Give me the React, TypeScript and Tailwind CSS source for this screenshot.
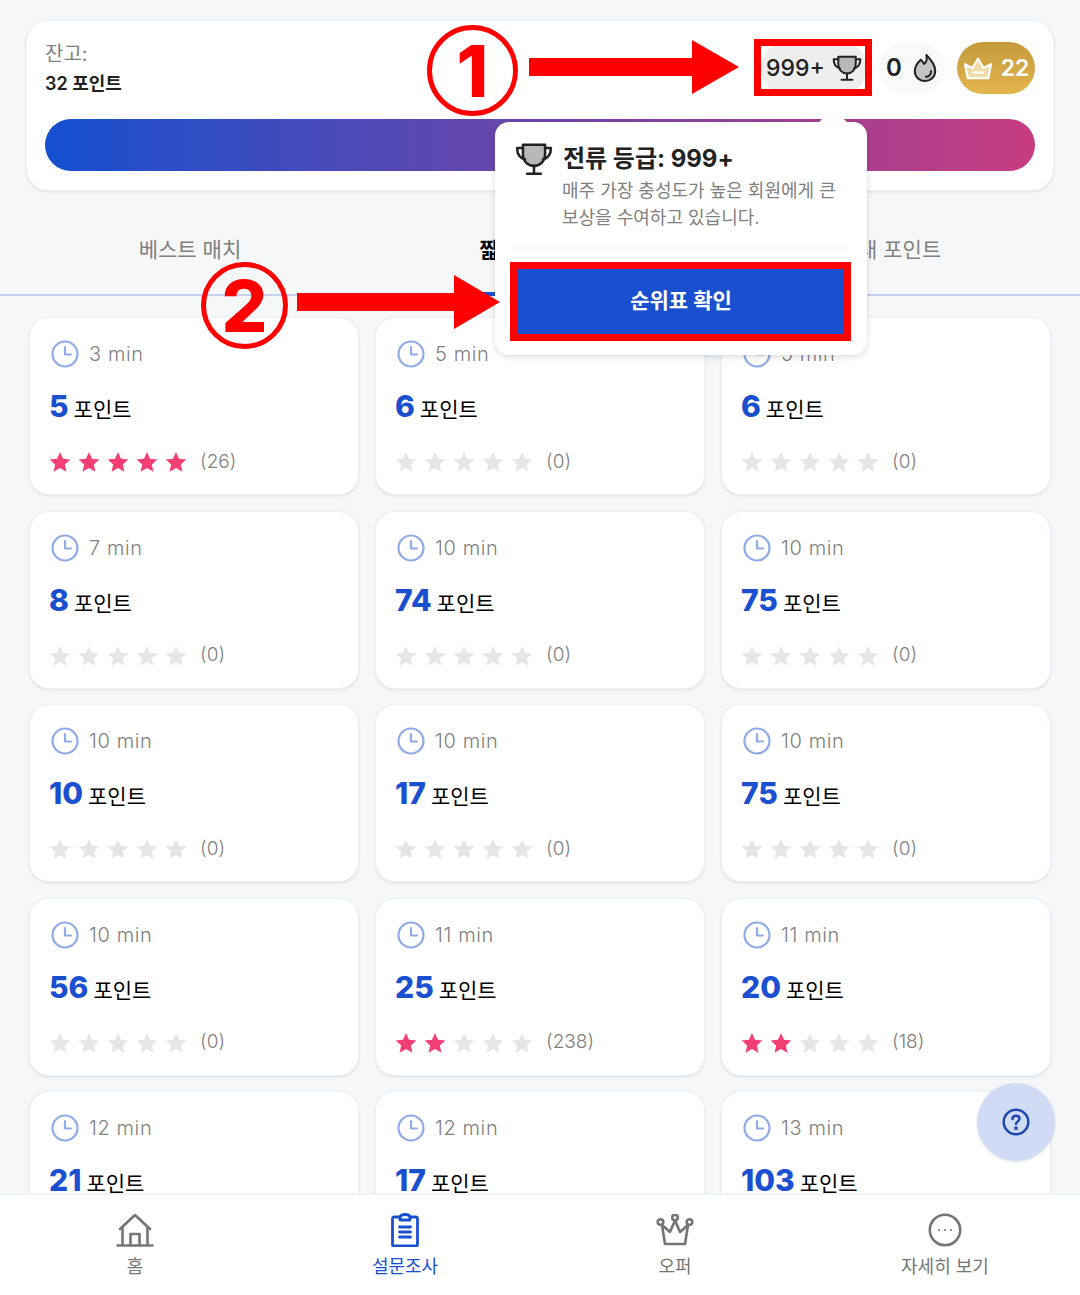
const CARDS = [
  { time: "3 min", pts: 5, filled: 5, count: 26 },
  { time: "5 min", pts: 6, filled: 0, count: 0 },
  { time: "5 min", pts: 6, filled: 0, count: 0 },
  { time: "7 min", pts: 8, filled: 0, count: 0 },
  { time: "10 min", pts: 74, filled: 0, count: 0 },
  { time: "10 min", pts: 75, filled: 0, count: 0 },
  { time: "10 min", pts: 10, filled: 0, count: 0 },
  { time: "10 min", pts: 17, filled: 0, count: 0 },
  { time: "10 min", pts: 75, filled: 0, count: 0 },
  { time: "10 min", pts: 56, filled: 0, count: 0 },
  { time: "11 min", pts: 25, filled: 2, count: 238 },
  { time: "11 min", pts: 20, filled: 2, count: 18 },
  { time: "12 min", pts: 21, filled: 0, count: 0 },
  { time: "12 min", pts: 17, filled: 0, count: 0 },
  { time: "13 min", pts: 103, filled: 0, count: 0 },
];

function Trophy({ size = 32 }: { size?: number }) {
  return (
    <svg width={size} height={size} viewBox="0 0 36 36" fill="none" stroke="#222" strokeWidth="2.400" strokeLinejoin="round" strokeLinecap="round">
      <path d="M7.500 4.500h21V13c0 7-4.500 11.500-10.500 11.500S7.500 20 7.500 13z" fill="#b8b8b8" />
      <path d="M7.500 7.500H2c0 6 2.500 9.500 7.500 11M28.500 7.500H34c0 6-2.500 9.500-7.500 11" />
      <path d="M18 24.500V31M11.500 32h13" />
    </svg>
  );
}

function Flame() {
  return (
    <svg width="26" height="32" viewBox="0 0 28 32" fill="#c4c4c4" stroke="#222" strokeWidth="2.200" strokeLinejoin="round" strokeLinecap="round">
      <path d="M15.500 2c.5 4 1 7-2.500 9.500C12 9.500 11 8.500 9.500 7 5 11 3 15 3 19.500 3 25.500 8 30 14 30s11-4.500 11-10.500C25 12 20 7 15.500 2z" />
      <path d="M20.500 19.500c0 3.500-2.500 5.800-5.500 6" fill="none" />
    </svg>
  );
}

function Crown() {
  return (
    <svg width="30" height="26" viewBox="0 0 32 28" fill="#efdca6" stroke="#fff" strokeWidth="2.400" strokeLinejoin="round" strokeLinecap="round">
      <path d="M5 25 2 10l8 4 6-10 6 10 8-4-3 15z" />
      <path d="M11 19h10" fill="none" />
    </svg>
  );
}

function Clock() {
  return (
    <svg width="28" height="28" viewBox="0 0 28 28" fill="none" stroke="#8fabe6" strokeWidth="2.200" strokeLinecap="round" strokeLinejoin="round" className="shrink-0">
      <circle cx="14" cy="14" r="12.500" />
      <path d="M14 7v7.500h6" />
    </svg>
  );
}

function Star({ on }: { on: boolean }) {
  return (
    <svg width="22" height="22" viewBox="0 0 24 24" fill={on ? "#f43f75" : "#e6e6e6"}>
      <path d="M12 1l3.300 7.400 8 .9-6 5.400 1.700 7.900L12 18.600l-7 4 1.700-7.900-6-5.400 8-.9z" />
    </svg>
  );
}

function SurveyCard({ time, pts, filled, count }: { time: string; pts: number; filled: number; count: number }) {
  return (
    <div className="h-[178px] bg-white rounded-[20px] border border-[#f0f1f3] shadow-[0_1px_3px_rgba(0,0,0,0.10)] pl-[19px] pt-[22px]">
      <div className="flex items-center gap-[10px] ml-[2px] h-[28px] text-[20px] font-light text-[#808080] tracking-[0.6px]">
        <Clock />
        <span>{time}</span>
      </div>
      <div className="flex items-baseline gap-[5px] mt-[20px] h-[36px] leading-[36px]">
        <span className="text-[30px] font-extrabold text-[#1a4fd0]">{pts}</span>
        <span className="text-[21px] text-black">포인트</span>
      </div>
      <div className="flex items-center mt-[25px] h-[26px]">
        <div className="flex gap-[7px]">
          {[0, 1, 2, 3, 4].map((i) => (
            <Star key={i} on={i < filled} />
          ))}
        </div>
        <span className="ml-[13px] text-[19px] font-light text-[#808080]">({count})</span>
      </div>
    </div>
  );
}

function NavItem({ label, active, children }: { label: string; active?: boolean; children: React.ReactNode }) {
  return (
    <div className={`flex-1 flex flex-col items-center pt-[16px] ${active ? "text-[#1a4fd0]" : "text-[#757575]"}`}>
      <div className="h-[38px] flex items-center justify-center">{children}</div>
      <span className="mt-[5px] text-[18px] leading-[26px]">{label}</span>
    </div>
  );
}

export default function App() {
  return (
    <div className="relative w-[1080px] h-[1295px] overflow-hidden flex flex-col bg-[#f6f7f9] font-[family-name:Inter,'Noto_Sans_CJK_KR',sans-serif]">
      {/* Balance card */}
      <div className="shrink-0 mx-[26px] mt-[20px] h-[171px] bg-white rounded-[22px] border border-[#f0f1f3] shadow-[0_1px_3px_rgba(0,0,0,0.10)] px-[18px] pt-[20px]">
        <div className="flex justify-between h-[56px]">
          <div>
            <div className="text-[20px] leading-[26px] text-[#808080]">잔고:</div>
            <div className="mt-[4px] text-[18px] leading-[26px] font-semibold text-[#222]">32 포인트</div>
          </div>
          <div className="flex items-center gap-[12px] h-[52px] mt-[1px]">
            <div className="w-[106px] h-[52px] rounded-full bg-[#eeeeee] flex items-center justify-center gap-[7px] text-[23px] font-medium text-[#222]">
              999+ <Trophy size={30} />
            </div>
            <div className="w-[66px] h-[52px] rounded-full bg-[#f9f9f9] flex items-center justify-center gap-[10px] text-[24px] font-semibold text-[#222]">
              0 <Flame />
            </div>
            <div className="w-[78px] h-[52px] rounded-full bg-[linear-gradient(180deg,#c49a3c,#e2b44c)] flex items-center justify-center gap-[8px] text-[23px] font-semibold text-white">
              <Crown /> 22
            </div>
          </div>
        </div>
        <div className="mt-[22px] h-[52px] rounded-full bg-[linear-gradient(90deg,#1550d0,#c83c80)]" />
      </div>

      {/* Tabs */}
      <div className="shrink-0 h-[105px] flex border-b-2 border-[#c5d3f0] px-[15px] text-[21px] text-[#808080]">
        <div className="flex-1 flex justify-center pt-[43px]">베스트 매치</div>
        <div className="flex-1 flex justify-center pt-[43px] font-bold text-black">
          <span className="relative h-[62px]">
            짧은 설문조사
            <span className="absolute left-0 right-0 bottom-0 h-[4px] bg-[#1a4fd0]" />
          </span>
        </div>
        <div className="flex-1 flex justify-center pt-[43px]">최대 포인트</div>
      </div>

      {/* Survey list */}
      <div className="flex-1 min-h-0 overflow-hidden px-[29px] pt-[21px]">
        <div className="grid grid-cols-3 gap-x-4 gap-y-[15.500px]">
          {CARDS.map((c, i) => (
            <SurveyCard key={i} {...c} />
          ))}
        </div>
      </div>

      {/* Bottom nav */}
      <div className="shrink-0 h-[102px] flex bg-white border-t-2 border-[#f1f2f4]">
        <NavItem label="홈">
          <svg width="38" height="34" viewBox="0 0 38 34" fill="none" stroke="currentColor" strokeWidth="2.600" strokeLinecap="round" strokeLinejoin="round">
            <path d="M4 16 19 2l15 14" />
            <path d="M6.500 14v18M31.500 14v18M1.500 32.500h35" />
            <path d="M14.500 32V21h9v11" />
          </svg>
        </NavItem>
        <NavItem label="설문조사" active>
          <svg width="28" height="34" viewBox="0 0 28 34" fill="none" stroke="currentColor" strokeWidth="2.800" strokeLinecap="round" strokeLinejoin="round">
            <path d="M9 4H3a1.500 1.500 0 0 0-1.500 1.500v26A1.500 1.500 0 0 0 3 33h22a1.500 1.500 0 0 0 1.500-1.500v-26A1.500 1.500 0 0 0 25 4h-6" />
            <path d="M9 7V4.500C9 2.500 11 1.500 14 1.500s5 1 5 3V7z" />
            <path d="M8.500 14h11M8.500 19h11M8.500 24h11" />
          </svg>
        </NavItem>
        <NavItem label="오퍼">
          <svg width="38" height="32" viewBox="0 0 38 32" fill="none" stroke="currentColor" strokeWidth="2.600" strokeLinecap="round" strokeLinejoin="round">
            <circle cx="4.500" cy="8" r="2.800" />
            <circle cx="19" cy="3.500" r="2.800" />
            <circle cx="33.500" cy="8" r="2.800" />
            <path d="M6 11l3 19h20l3-19-8 7-5-11.500L14 18z" />
          </svg>
        </NavItem>
        <NavItem label="자세히 보기">
          <svg width="34" height="34" viewBox="0 0 34 34" fill="none" stroke="currentColor" strokeWidth="2.600">
            <circle cx="17" cy="17" r="15.200" />
            <circle cx="11" cy="17" r="1.100" fill="currentColor" stroke="none" />
            <circle cx="17" cy="17" r="1.100" fill="currentColor" stroke="none" />
            <circle cx="23" cy="17" r="1.100" fill="currentColor" stroke="none" />
          </svg>
        </NavItem>
      </div>

      {/* Help button */}
      <div className="absolute left-[977px] top-[1083px] w-[78px] h-[78px] rounded-full bg-[#d0dcf5] shadow-[0_1px_3px_rgba(0,0,0,0.12)] flex items-center justify-center">
        <svg width="28" height="28" viewBox="0 0 28 28" fill="none" stroke="#1f48b0" strokeWidth="2.500" strokeLinecap="round">
          <circle cx="14" cy="14" r="12.300" />
          <path d="M10.500 11c0-2 1.500-3.300 3.500-3.300s3.500 1.300 3.500 3.100c0 2.600-3.500 2.600-3.500 5.200" />
          <circle cx="14" cy="20.300" r="0.700" fill="#1f48b0" />
        </svg>
      </div>

      {/* Rank popover */}
      <div className="absolute left-[495px] top-[122px] w-[372px] h-[233px] bg-white rounded-[14px] shadow-[0_2px_6px_rgba(0,0,0,0.14)] px-[20px] pt-[20px]">
        <div className="absolute left-[326px] top-[-9px] w-[24px] h-[24px] rotate-45 bg-white rounded-[3px]" />
        <div className="relative flex items-center gap-[10px] h-[34px]">
          <Trophy size={38} />
          <span className="text-[24px] font-bold text-[#222]">전류 등급: 999+</span>
        </div>
        <div className="ml-[47px] mt-[1px] text-[18px] leading-[27px] text-[#808080] whitespace-nowrap">
          <div>매주 가장 충성도가 높은 회원에게 큰</div>
          <div>보상을 수여하고 있습니다.</div>
        </div>
        <div className="mt-[16px] h-[2px] bg-[#f6f6f6]" />
        <div className="mt-[19px] -mx-[3px] h-[66px] bg-[#1a4fd0] flex items-center justify-center text-[21px] font-bold text-white">
          순위표 확인
        </div>
      </div>

      {/* Annotations */}
      <div className="absolute left-[754px] top-[39px] w-[118px] h-[57px] border-[7px] border-[#ff0000]" />
      <div className="absolute left-[510px] top-[262px] w-[341px] h-[79px] border-[7px] border-[#ff0000]" />
      <div className="absolute left-[427px] top-[25px] w-[91px] h-[91px] rounded-full border-[5px] border-[#ff0000] flex items-center justify-center text-[72px] leading-none font-extrabold text-[#ff0000]">1</div>
      <div className="absolute left-[201px] top-[262px] w-[87px] h-[87px] rounded-full border-[5px] border-[#ff0000] flex items-center justify-center text-[72px] leading-none font-extrabold text-[#ff0000]">2</div>
      <svg className="absolute left-[529px] top-[40px]" width="210" height="54" viewBox="0 0 210 54" fill="#ff0000">
        <path d="M0 18h163V0l47 27-47 27V36H0z" />
      </svg>
      <svg className="absolute left-[297px] top-[275px]" width="203" height="54" viewBox="0 0 203 54" fill="#ff0000">
        <path d="M0 18h157V0l46 27-46 27V36H0z" />
      </svg>
    </div>
  );
}
